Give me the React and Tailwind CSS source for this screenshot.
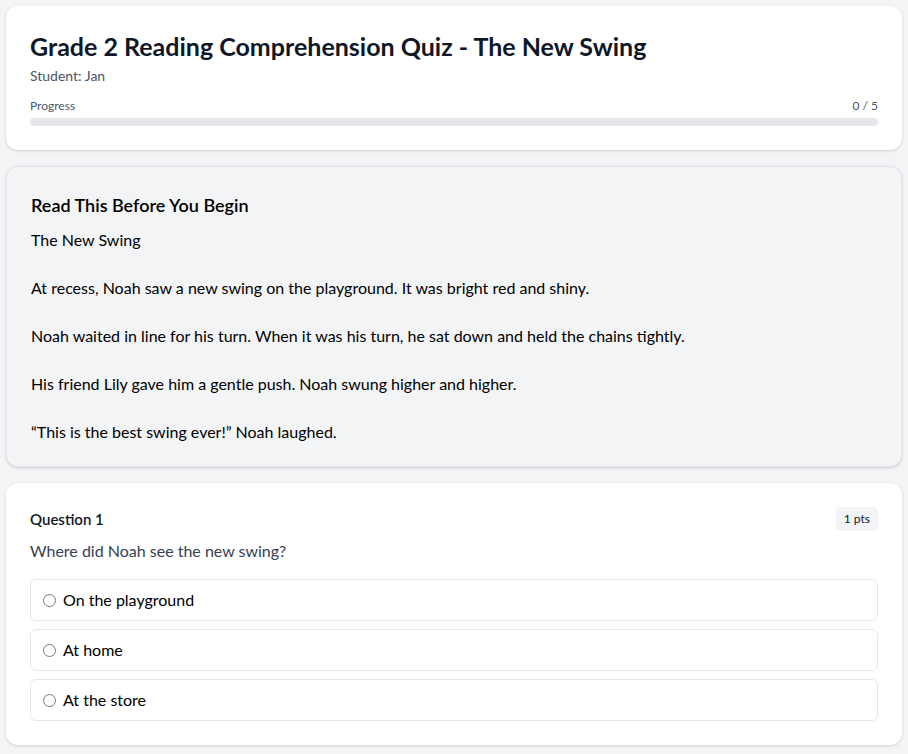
import React from "react";

const passage = [
  "The New Swing",
  "At recess, Noah saw a new swing on the playground. It was bright red and shiny.",
  "Noah waited in line for his turn. When it was his turn, he sat down and held the chains tightly.",
  "His friend Lily gave him a gentle push. Noah swung higher and higher.",
  "\u201CThis is the best swing ever!\u201D Noah laughed.",
];

const options = ["On the playground", "At home", "At the store"];

export default function App() {
  return (
    <div
      className="min-h-screen bg-gray-100 p-[6px] flex flex-col gap-4"
      style={{ fontFamily: "Lato, 'Noto Sans', sans-serif" }}
    >
      {/* Header card */}
      <div className="bg-white rounded-xl shadow-[0_1px_3px_rgba(0,0,0,0.15)] p-6">
        <h1 className="text-[25px] leading-8 font-bold text-gray-900">
          Grade 2 Reading Comprehension Quiz - The New Swing
        </h1>
        <p className="text-sm text-gray-600 mt-1">Student: Jan</p>
        <div className="mt-3">
          <div className="flex justify-between text-xs text-gray-600 mb-1">
            <span>Progress</span>
            <span>0 / 5</span>
          </div>
          <div className="h-2 rounded-full bg-gray-200" />
        </div>
      </div>

      {/* Passage card */}
      <div className="bg-gray-100 rounded-xl border border-gray-200 shadow-[0_1px_3px_rgba(0,0,0,0.15)] px-6 pt-6 pb-[22px]">
        <h2 className="text-lg leading-7 font-semibold text-black mb-[9px]">
          Read This Before You Begin
        </h2>
        <div className="text-base leading-6 text-black">
          {passage.map((line, i) => (
            <p key={i} className={i > 0 ? "mt-6" : ""}>
              {line}
            </p>
          ))}
        </div>
      </div>

      {/* Question card */}
      <div className="bg-white rounded-xl shadow-[0_1px_3px_rgba(0,0,0,0.15)] p-6">
        <div className="flex items-center justify-between">
          <h3 className="text-[15px] font-semibold text-gray-900">Question 1</h3>
          <span className="text-xs bg-gray-100 rounded px-2 h-6 flex items-center text-gray-900">
            1 pts
          </span>
        </div>
        <p className="mt-2 text-base leading-6 text-gray-700">
          Where did Noah see the new swing?
        </p>
        <div className="mt-4 flex flex-col gap-2">
          {options.map((opt) => (
            <label
              key={opt}
              className="flex items-center gap-[7px] border border-gray-200 rounded-md px-3 py-2 text-base leading-6 text-black"
            >
              <input type="radio" name="q1" className="w-[13px] h-[13px]" />
              {opt}
            </label>
          ))}
        </div>
      </div>
    </div>
  );
}
